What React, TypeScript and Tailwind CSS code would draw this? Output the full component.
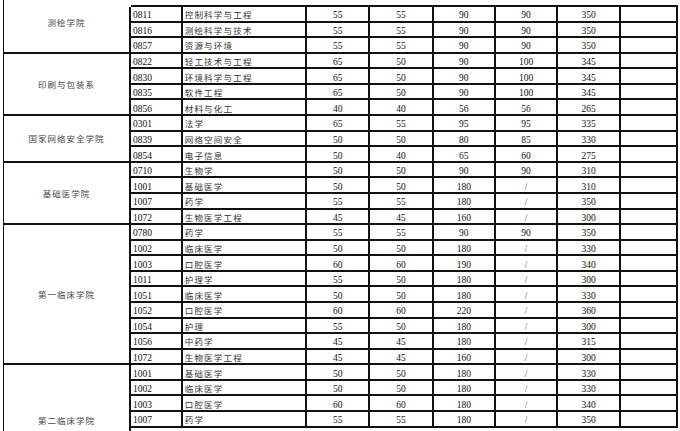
type Row = [string, string, string, string, string, string, string]

type Group = {
  name: string
  cell: string
  rows: Row[]
}

const groups: Group[] = [
  {
    name: '测绘学院',
    cell: 'row-span-4',
    rows: [
      ['0811', '控制科学与工程', '55', '55', '90', '90', '350'],
      ['0816', '测绘科学与技术', '55', '55', '90', '90', '350'],
      ['0857', '资源与环境', '55', '55', '90', '90', '350'],
    ],
  },
  {
    name: '印刷与包装系',
    cell: 'row-span-4 border-r-2 border-b-2 items-center pt-[2px]',
    rows: [
      ['0822', '轻工技术与工程', '65', '50', '90', '100', '345'],
      ['0830', '环境科学与工程', '65', '50', '90', '100', '345'],
      ['0835', '软件工程', '65', '50', '90', '100', '345'],
      ['0856', '材料与化工', '40', '40', '56', '56', '265'],
    ],
  },
  {
    name: '国家网络安全学院',
    cell: 'row-span-3 border-r-2 border-b-2 items-center pt-[2px]',
    rows: [
      ['0301', '法学', '65', '55', '95', '95', '335'],
      ['0839', '网络空间安全', '50', '50', '80', '85', '330'],
      ['0854', '电子信息', '50', '40', '65', '60', '275'],
    ],
  },
  {
    name: '基础医学院',
    cell: 'row-span-4 border-r-2 border-b-2 items-center pt-[2px]',
    rows: [
      ['0710', '生物学', '50', '50', '90', '90', '310'],
      ['1001', '基础医学', '50', '50', '180', '/', '310'],
      ['1007', '药学', '55', '55', '180', '/', '350'],
      ['1072', '生物医学工程', '45', '45', '160', '/', '300'],
    ],
  },
  {
    name: '第一临床学院',
    cell: 'row-span-9 border-r-2 border-b-2 items-center pt-[2px]',
    rows: [
      ['0780', '药学', '55', '55', '90', '90', '350'],
      ['1002', '临床医学', '50', '50', '180', '/', '330'],
      ['1003', '口腔医学', '60', '60', '190', '/', '340'],
      ['1011', '护理学', '55', '50', '180', '/', '300'],
      ['1051', '临床医学', '50', '50', '180', '/', '330'],
      ['1052', '口腔医学', '60', '60', '220', '/', '360'],
      ['1054', '护理', '55', '50', '180', '/', '300'],
      ['1056', '中药学', '45', '45', '180', '/', '315'],
      ['1072', '生物医学工程', '45', '45', '160', '/', '300'],
    ],
  },
  {
    name: '第二临床学院',
    cell: 'row-span-5 border-r-2 items-start pt-[50px]',
    rows: [
      ['1001', '基础医学', '50', '50', '180', '/', '330'],
      ['1002', '临床医学', '50', '50', '180', '/', '330'],
      ['1003', '口腔医学', '60', '60', '180', '/', '340'],
      ['1007', '药学', '55', '55', '180', '/', '350'],
    ],
  },
]

const line = 'border-r-2 border-b-2 border-[#111]'

function DataRow({ row }: { row: Row }) {
  const [code, major, ...scores] = row

  return (
    <>
      <div className={`${line} flex items-center pl-[2px] pt-[3px] text-[9.5px] text-[#111]`}>
        {code}
      </div>
      <div className={`${line} flex items-center pl-[2px] pt-[3px] text-[8.5px] tracking-[1.2px] text-[#333]`}>
        {major}
      </div>
      {scores.map((score, i) => (
        <div
          key={i}
          className={`${line} flex items-center justify-center pt-[3px] text-[9.5px] ${
            score === '/' ? 'text-[#555]' : 'text-[#111]'
          }`}
        >
          {score}
        </div>
      ))}
      <div className={line} />
    </>
  )
}

export default function App() {
  return (
    <main className="h-[431px] overflow-hidden bg-white font-['Liberation_Serif','Noto_Sans_CJK_SC',serif]">
      <div className="ml-[3px] grid grid-cols-[128px_51.7px_124.3px_63.3px_63.4px_62.3px_62.3px_62.7px_56.7px] grid-rows-[7px_repeat(27,15.58px)_12px] leading-[12px]">
        {groups.map((group, gi) => (
          <div key={group.name} className="contents">
            {gi === 0 ? (
              <>
                <div className="row-span-4 flex flex-col border-l-[1.5px] border-[#111]">
                  <div className="h-[7px]" />
                  <div className="flex flex-1 items-center justify-center border-r-2 border-b-2 border-[#111] pb-[13px] text-[8.5px] tracking-[1px] text-[#444]">
                    {group.name}
                  </div>
                </div>
                <div className="col-span-8 border-b-2 border-[#111]" />
              </>
            ) : (
              <div
                className={`${group.cell} flex justify-center border-l-[1.5px] border-[#111] text-[8.5px] tracking-[1px] text-[#444]`}
              >
                {group.name}
              </div>
            )}
            {group.rows.map((row) => (
              <DataRow key={row[0] + row[1]} row={row} />
            ))}
          </div>
        ))}
      </div>
    </main>
  )
}
